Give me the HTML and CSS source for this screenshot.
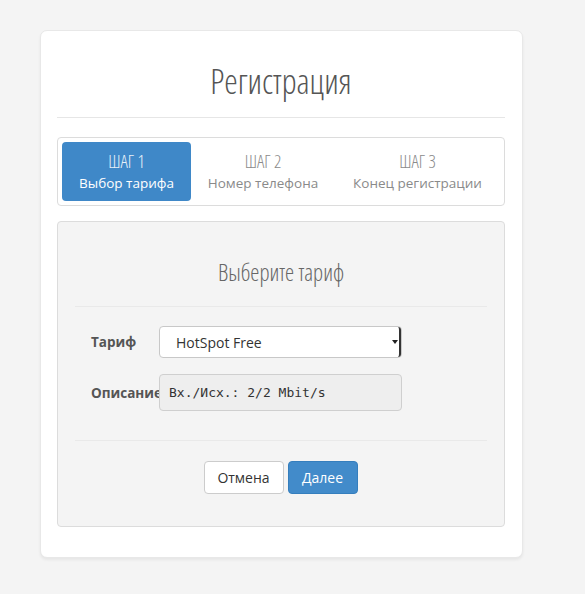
FILE: index.html
```html
<!DOCTYPE html>
<html lang="ru">
<head>
<meta charset="utf-8">
<link rel="stylesheet" href="styles.css">
</head>
<body>
<div class="card">
  <h1 class="title">Регистрация</h1>
  <div class="rule"></div>
  <div class="steps">
    <div class="step active"><div class="step-num">ШАГ 1</div><div class="step-name">Выбор тарифа</div></div>
    <div class="step"><div class="step-num">ШАГ 2</div><div class="step-name">Номер телефона</div></div>
    <div class="step"><div class="step-num">ШАГ 3</div><div class="step-name">Конец регистрации</div></div>
  </div>
  <div class="panel">
    <h2 class="subtitle">Выберите тариф</h2>
    <div class="panel-rule"></div>
    <div class="form">
      <div class="row">
        <label class="label">Тариф</label>
        <div class="select">
          <span class="select-text">HotSpot Free</span>
          <span class="select-arrow"><svg width="6" height="4" viewBox="0 0 6 4"><path d="M0 0H6L3 4Z" fill="#222"/></svg></span>
        </div>
      </div>
      <div class="row row-desc">
        <label class="label">Описание</label>
        <div class="desc">Вх./Исх.: 2/2 Mbit/s</div>
      </div>
    </div>
    <div class="panel-rule"></div>
    <div class="actions">
      <button class="btn btn-default">Отмена</button>
      <button class="btn btn-primary">Далее</button>
    </div>
  </div>
</div>
</body>
</html>
```

FILE: styles.css
```css
html, body {
  margin: 0;
  padding: 0;
}
body {
  background: #f4f4f4;
  font-family: "Open Sans", "DejaVu Sans", sans-serif;
  color: #333;
  padding-top: 30px;
  height: 594px;
  box-sizing: border-box;
}
.card {
  margin-left: 40px;
  width: 483px;
  height: 528px;
  box-sizing: border-box;
  background: #fff;
  border: 1px solid #e8e8e8;
  border-radius: 7px;
  box-shadow: 0 2px 3px rgba(0,0,0,0.06);
  padding: 0 17px 0 16px;
}
.title {
  margin: 0;
  padding-top: 28px;
  height: 58px;
  text-align: center;
  font-family: "Open Sans", sans-serif;
  font-weight: 300;
  font-stretch: 75%;
  font-size: 34px;
  line-height: 44px;
  color: #555;
}
.rule {
  height: 1px;
  background: #e6e6e6;
}
.steps {
  margin-top: 19px;
  height: 69px;
  box-sizing: border-box;
  border: 1px solid #dcdcdc;
  border-radius: 4px;
  padding: 4px;
  display: flex;
}
.step {
  padding: 0;
  height: 59px;
  border-radius: 4px;
  text-align: center;
  color: #8a8a8a;
  box-sizing: border-box;
}
.step.active {
  background: #3f88c8;
  color: #fff;
  width: 129px;
}
.step:nth-child(2) { width: 144px; }
.step:nth-child(3) { width: 165px; }
.step-num {
  font-weight: 300;
  font-stretch: 75%;
  font-size: 18px;
  line-height: 20px;
  padding-top: 9px;
}
.step.active .step-num { color: #e8f0f8; }
.step-name {
  font-size: 13.5px;
  line-height: 18px;
  margin-top: 3px;
  white-space: nowrap;
}
.panel {
  margin-top: 15px;
  height: 306px;
  box-sizing: border-box;
  background: #f4f4f4;
  border: 1px solid #dcdcdc;
  border-radius: 4px;
  padding: 0 17px;
}
.subtitle {
  margin: 0;
  padding-top: 34px;
  height: 50px;
  text-align: center;
  font-weight: 300;
  font-stretch: 75%;
  font-size: 23px;
  line-height: 32px;
  color: #666;
}
.panel-rule {
  height: 1px;
  background: #e9e9e9;
}
.form {
  padding-top: 19px;
  height: 114px;
}
.row {
  display: flex;
  align-items: center;
  height: 32px;
}
.row-desc {
  margin-top: 16px;
  height: 37px;
}
.label {
  width: 84px;
  padding-left: 16px;
  box-sizing: border-box;
  font-weight: 700;
  font-size: 13.5px;
  color: #555;
  white-space: nowrap;
  overflow: visible;
}
.select {
  width: 243px;
  height: 32px;
  box-sizing: border-box;
  background: #fff;
  border: 1px solid #c8c8c8;
  border-radius: 4px;
  display: flex;
  align-items: center;
  justify-content: space-between;
  padding-left: 16px;
  position: relative;
}
.select-text {
  font-size: 14px;
  color: #333;
}
.select-arrow {
  width: 8px;
  height: 30px;
  border-right: 2px solid #333;
  display: flex;
  align-items: center;
  justify-content: center;
  border-radius: 0 3px 3px 0;
}
.desc {
  width: 243px;
  height: 37px;
  box-sizing: border-box;
  background: #eeeeee;
  border: 1px solid #cfcfcf;
  border-radius: 4px;
  padding-left: 9px;
  display: flex;
  align-items: center;
  font-family: "DejaVu Sans Mono", "Liberation Mono", monospace;
  font-size: 13px;
  color: #333;
  position: relative;
}
.actions {
  display: flex;
  justify-content: center;
  gap: 4px;
  padding-top: 20px;
  padding-right: 1px;
}
.btn {
  height: 33px;
  box-sizing: border-box;
  border-radius: 4px;
  font-family: "Open Sans", sans-serif;
  font-size: 14px;
  padding: 0 6px;
  cursor: pointer;
}
.btn-default {
  width: 80px;
  background: #fff;
  border: 1px solid #cccccc;
  color: #333;
}
.btn-primary {
  width: 70px;
  background: #428bca;
  border: 1px solid #357ebd;
  color: #fff;
}
```
